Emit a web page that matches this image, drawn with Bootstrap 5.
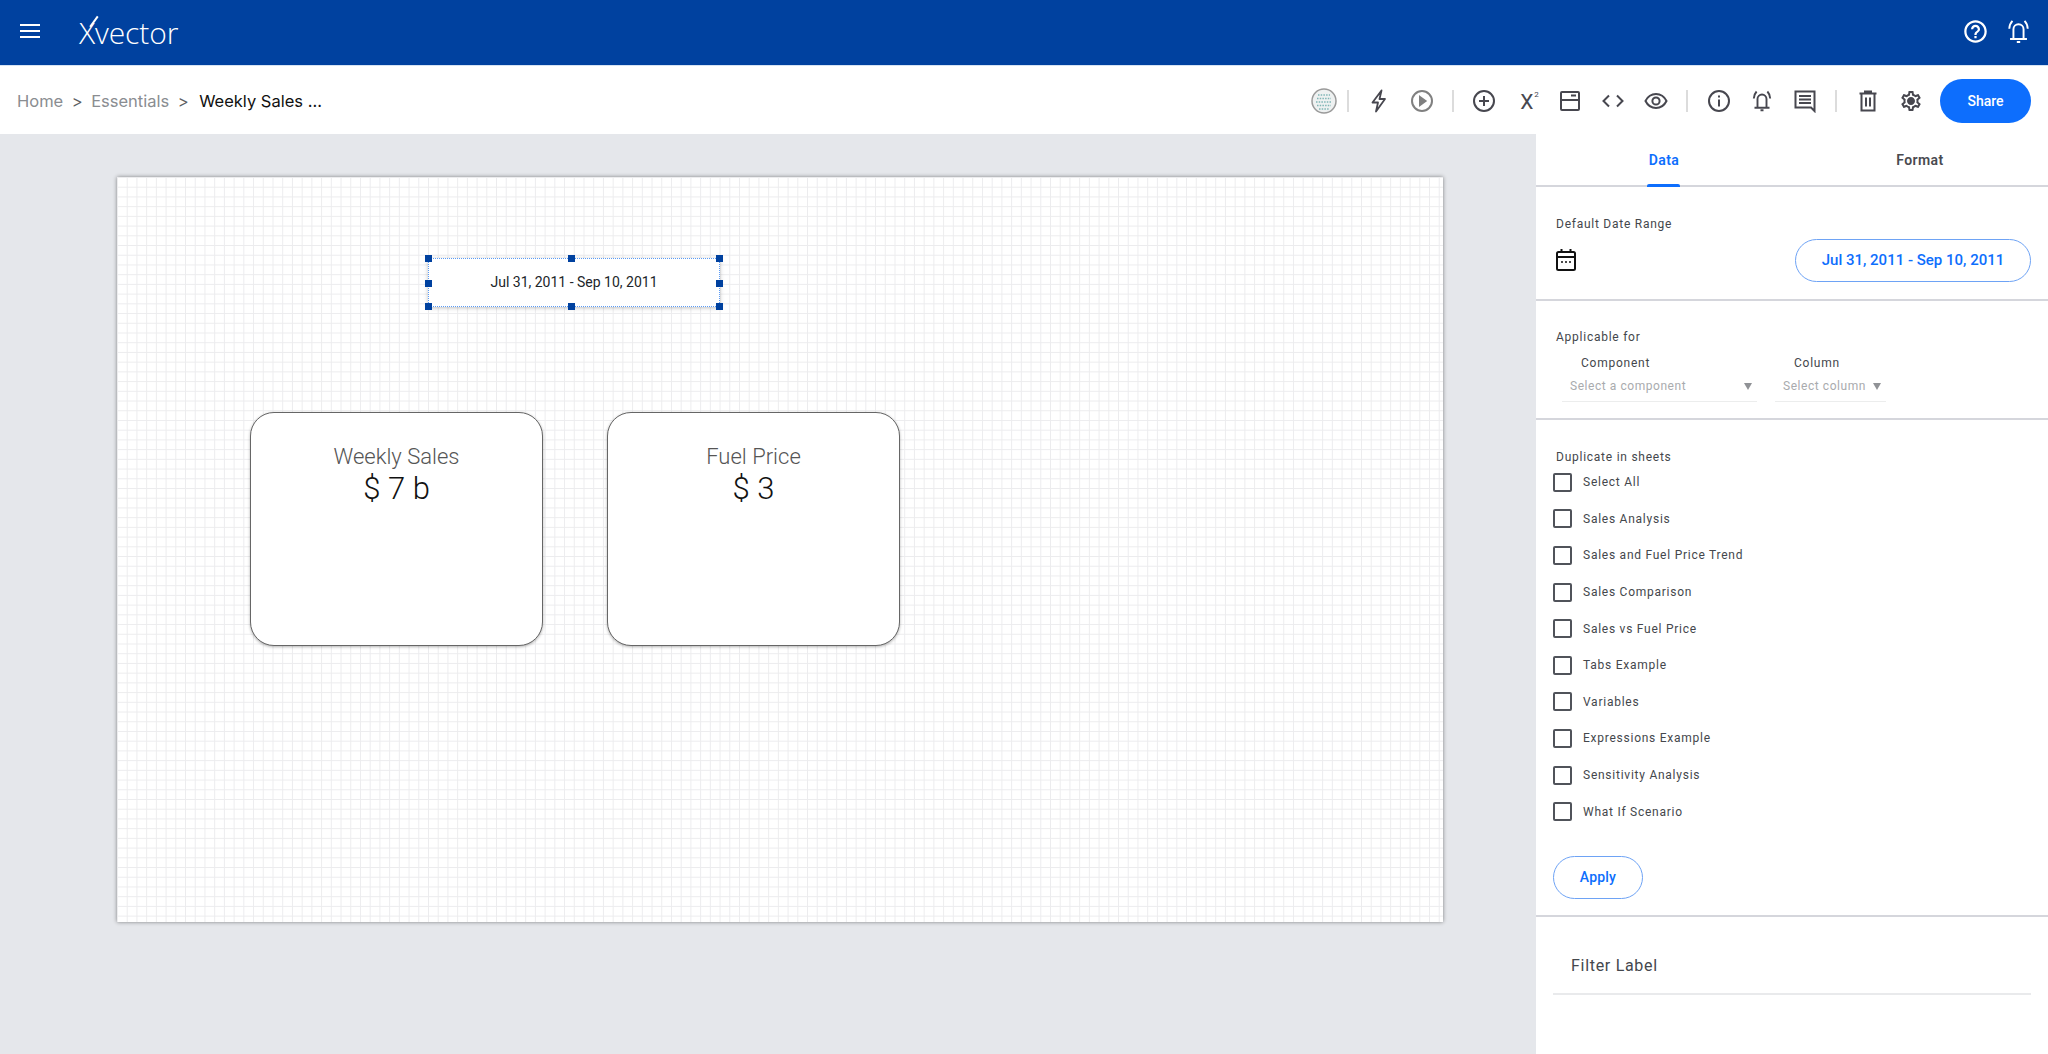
<!doctype html>
<html lang="en">
<head>
<meta charset="utf-8">
<title>Xvector</title>
<link href="https://cdn.jsdelivr.net/npm/bootstrap@5.3.0/dist/css/bootstrap.min.css" rel="stylesheet">
<style>
  body { font-family: Roboto, "Liberation Sans", sans-serif; height: 1054px; overflow: hidden; color: #212529; }
  .top-bar { height: 66px; background: #00419f; padding: 0 10px 3px 20px; border-bottom: 1px solid #d5e3f3; }
  .brand { position: relative; font-family: "Open Sans", sans-serif; font-weight: 300; font-size: 30px; color: #fff; margin: 3px 0 0 39px; letter-spacing: -.1px; line-height: 1; }
  .brand::after { content: ""; position: absolute; left: 14px; top: -3px; width: 1.5px; height: 13px; background: #fff; transform: rotate(36deg); }
  .top-bar svg.ico { width: 27px; height: 27px; }
  .top-icons { gap: 16px; margin-right: 6.5px; }
  .tool-bar { height: 68px; padding: 2px 17px 0; }
  .crumbs { font-family: Inter, sans-serif; font-size: 16.5px; gap: 8.5px; }
  .crumbs .muted { color: #8a8d91; }
  .crumbs .sep { color: #5c5f63; }
  .crumbs .now { color: #111; margin-left: 2px; }
  .tool { width: 43px; height: 30px; color: #47474f; }
  .tool svg { width: 24px; height: 24px; }
  .tool.grey { color: #808080; }
  .tool-sep { width: 2px; height: 22px; background: #dcdcdc; margin: 0 9px; }
  .tool-sep.first { margin: 0 8.5px 0 9.5px; }
  .tool-sep.second { margin: 0 8px 0 9px; }
  .avatar { width: 26px; height: 26px; }
  .x2 { font-size: 21px; line-height: 1; padding: 3px 0 0 6px; }
  .x2 sup { font-size: 8px; top: -.9em; margin-left: 1px; }
  .btn-share { width: 91px; height: 44px; border-radius: 22px; margin: 0 0 0 8px; font-size: 14px; font-weight: 500; color: #fff; background: #0d6efd; border: 0; }
  .work { height: 920px; }
  .canvas { width: 1536px; background: #e5e7eb; padding: 43px 0 0 117px; }
  .sheet { position: relative; width: 1326px; height: 745px; background-color: #fff;
    background-image: linear-gradient(#ececee 1px, transparent 1px), linear-gradient(90deg, #ececee 1px, transparent 1px);
    background-size: 9.72px 9.72px; box-shadow: 0 0 4px rgba(0,0,0,.45); }
  .date-box { position: absolute; left: 311px; top: 81px; width: 292px; height: 49px; background: #fff; border: 1px dotted #5b9bf5; font-size: 14px; box-shadow: 0 1px 4px rgba(0,0,0,.25); }
  .handle { position: absolute; width: 7px; height: 7px; background: #00419f; }
  .kpi { position: absolute; top: 235px; width: 293px; height: 234px; background: #fff; border: 1px solid #666; border-radius: 24px; padding-top: 29px; box-shadow: 0 1px 3px rgba(0,0,0,.3); }
  .kpi .name { font-size: 22px; font-weight: 300; color: #555; line-height: 30px; }
  .kpi .val { font-size: 31px; font-weight: 300; line-height: 34px; color: #111; }
  .panel { width: 512px; background: #fff; font-size: 12px; letter-spacing: .75px; color: #44474c; }
  .tabs { height: 53px; border-bottom: 2px solid #d5d6dc; }
  .tabs .nav-link { font-size: 14px; font-weight: 600; color: #4a4a50; padding: 0; height: 51px; line-height: 52px; letter-spacing: .4px; position: relative; }
  .tabs .nav-link.active { color: #0d6efd; }
  .tabs .nav-link.active::after { content: ""; position: absolute; left: 50%; margin-left: -17px; bottom: -2px; width: 33px; height: 3px; background: #0d6efd; border-radius: 2px 2px 0 0; }
  .block { border-bottom: 2px solid #d5d6dc; padding: 0 17px 0 20px; }
  .pill { border: 1px solid #6ea3f5; border-radius: 22px; color: #0d6efd; background: #fff; font-weight: 500; font-size: 15px; letter-spacing: 0; }
  .pill.date { width: 236px; height: 43px; padding: 0; }
  .pill.apply { width: 90px; height: 43px; padding: 0; font-size: 14px; letter-spacing: .2px; margin-left: -3px; display: block; }
  .pick { border-bottom: 1px solid #eceded; color: #a9abae; padding: 0 5px 0 8px; height: 31px; letter-spacing: .55px; }
  .pick .arrow { width: 0; height: 0; border-left: 4px solid transparent; border-right: 4px solid transparent; border-top: 7px solid #909296; }
  .sheet-check { min-height: 0; height: 36.6px; padding: 0; margin: 0 0 0 -3px; gap: 11px; }
  .sheet-check .form-check-input { float: none; margin: 0; width: 19px; height: 19px; border: 2px solid #50535a; border-radius: 2px; }
  .filter-label { font-size: 16px; letter-spacing: .7px; color: #44474d; border-bottom: 2px solid #e9eaec; padding: 0 0 15px 18px; margin: 37px 0 0 -3px; line-height: 24px; }
</style>
</head>
<body>

<!-- Top bar -->
<nav class="top-bar d-flex align-items-center justify-content-between">
  <div class="d-flex align-items-center">
    <svg width="20" height="16" viewBox="0 0 20 16" aria-hidden="true"><path d="M0 2h20M0 8h20M0 14h20" stroke="#fff" stroke-width="2"/></svg>
    <span class="brand">Xvector</span>
  </div>
  <div class="d-flex align-items-center top-icons">
    <svg class="ico" viewBox="0 0 24 24" fill="#fff"><path d="M11 18h2v-2h-2v2zm1-16C6.48 2 2 6.48 2 12s4.48 10 10 10 10-4.48 10-10S17.52 2 12 2zm0 18c-4.41 0-8-3.59-8-8s3.59-8 8-8 8 3.59 8 8-3.59 8-8 8zm0-14c-2.21 0-4 1.79-4 4h2c0-1.1.9-2 2-2s2 .9 2 2c0 2-3 1.75-3 5h2c0-2.25 3-2.5 3-5 0-2.21-1.79-4-4-4z"/></svg>
    <svg class="ico" viewBox="0 0 24 24" fill="none" stroke="#fff" stroke-width="1.7"><path d="M7.5 18.5V10a4.5 4.5 0 0 1 9 0v8.5M4.5 18.7h15M10.5 21.3h3M3.8 9.5c0-2.7 1-5 2.8-7M20.2 9.5c0-2.7-1-5-2.8-7"/></svg>
  </div>
</nav>

<!-- Breadcrumb and tools -->
<div class="tool-bar d-flex align-items-center justify-content-between bg-white">
  <div class="crumbs d-flex align-items-center">
    <span class="muted">Home</span><span class="sep">&gt;</span>
    <span class="muted">Essentials</span><span class="sep">&gt;</span>
    <span class="now">Weekly Sales ...</span>
  </div>
  <div class="d-flex align-items-center">
    <svg class="avatar" viewBox="0 0 26 26"><circle cx="13" cy="13" r="12" fill="#eef1f1" stroke="#9a9a9a" stroke-width="1.5"/><path d="M7 7h12M6 10.5h14M5 14h16M6 17.5h14M8 21h10" stroke="#7fb5b5" stroke-width="1.3" stroke-dasharray="1.5 1.2"/></svg>
    <span class="tool-sep first"></span>
    <span class="tool d-flex align-items-center justify-content-center"><svg viewBox="0 0 24 24" fill="none" stroke="currentColor" stroke-width="1.8" stroke-linejoin="round"><path d="M14.5 1.5 5.5 13.5H11L9 22.5l9-12.5h-5.500z"/></svg></span>
    <span class="tool grey d-flex align-items-center justify-content-center"><svg viewBox="0 0 24 24" fill="none" stroke="currentColor" stroke-width="2"><circle cx="12" cy="12" r="10"/><path d="M10 8l5.5 4-5.500 4z" fill="currentColor"/></svg></span>
    <span class="tool-sep second"></span>
    <span class="tool d-flex align-items-center justify-content-center"><svg viewBox="0 0 24 24" fill="none" stroke="currentColor" stroke-width="2"><circle cx="12" cy="12" r="10"/><path d="M12 7v10M7 12h10"/></svg></span>
    <span class="tool d-flex align-items-center justify-content-center x2">X<sup>2</sup></span>
    <span class="tool d-flex align-items-center justify-content-center"><svg viewBox="0 0 24 24" fill="none" stroke="currentColor" stroke-width="2"><rect x="3" y="3" width="18" height="18" rx="1"/><path d="M3 11h18M13 6.5h5"/></svg></span>
    <span class="tool d-flex align-items-center justify-content-center"><svg viewBox="0 0 24 24" fill="none" stroke="currentColor" stroke-width="2"><path d="M8 6.500 2.500 12 8 17.500M16 6.500l5.500 5.500-5.500 5.500"/></svg></span>
    <span class="tool d-flex align-items-center justify-content-center"><svg viewBox="0 0 24 24" fill="none" stroke="currentColor" stroke-width="2"><path d="M1.5 12C4 7 7.500 5 12 5s8 2 10.500 7C20 17 16.500 19 12 19S4 17 1.500 12z"/><circle cx="12" cy="12" r="3.6"/></svg></span>
    <span class="tool-sep"></span>
    <span class="tool d-flex align-items-center justify-content-center"><svg viewBox="0 0 24 24" fill="none" stroke="currentColor" stroke-width="2"><circle cx="12" cy="12" r="10"/><path d="M12 10.5V17.500M12 6.500v2"/></svg></span>
    <span class="tool d-flex align-items-center justify-content-center"><svg viewBox="0 0 24 24" fill="none" stroke="currentColor" stroke-width="1.9"><path d="M7.5 18.5V10a4.5 4.5 0 0 1 9 0v8.5M4.5 18.7h15M10.5 21.3h3M3.8 9.5c0-2.7 1-5 2.8-7M20.2 9.5c0-2.7-1-5-2.8-7"/></svg></span>
    <span class="tool d-flex align-items-center justify-content-center"><svg viewBox="0 0 24 24" fill="none" stroke="currentColor" stroke-width="2"><path d="M2.5 2.5h19V22L18 18.5H2.5z"/><path d="M6 7h12M6 10.5h12M6 14h12"/></svg></span>
    <span class="tool-sep"></span>
    <span class="tool d-flex align-items-center justify-content-center"><svg viewBox="0 0 24 24" fill="none" stroke="currentColor" stroke-width="2"><path d="M3.5 4.5h17M9 4.500V2.500h6v2M5.500 4.500V21.500h13V4.500M10 8.500v9M14 8.500v9"/></svg></span>
    <span class="tool d-flex align-items-center justify-content-center"><svg viewBox="0 0 24 24" fill="currentColor"><path d="M19.43 12.98c.04-.32.07-.64.07-.98 0-.34-.03-.66-.07-.98l2.11-1.65c.19-.15.24-.42.12-.64l-2-3.46c-.09-.16-.26-.25-.44-.25-.06 0-.12.01-.17.03l-2.49 1c-.52-.4-1.08-.73-1.69-.98l-.38-2.65C14.46 2.18 14.25 2 14 2h-4c-.25 0-.46.18-.49.42l-.38 2.65c-.61.25-1.17.59-1.69.98l-2.49-1c-.06-.02-.12-.03-.18-.03-.17 0-.34.09-.43.25l-2 3.46c-.13.22-.07.49.12.64l2.11 1.65c-.04.32-.07.65-.07.98 0 .33.03.66.07.98l-2.11 1.65c-.19.15-.24.42-.12.64l2 3.46c.09.16.26.25.44.25.06 0 .12-.01.17-.03l2.49-1c.52.4 1.08.73 1.69.98l.38 2.65c.03.24.24.42.49.42h4c.25 0 .46-.18.49-.42l.38-2.65c.61-.25 1.17-.59 1.69-.98l2.49 1c.06.02.12.03.18.03.17 0 .34-.09.43-.25l2-3.46c.12-.22.07-.49-.12-.64l-2.11-1.65zm-1.98-1.71c.04.31.05.52.05.73 0 .21-.02.43-.05.73l-.14 1.13.89.7 1.08.84-.7 1.21-1.27-.51-1.04-.42-.9.68c-.43.32-.84.56-1.25.73l-1.06.43-.16 1.13-.2 1.35h-1.4l-.19-1.35-.16-1.13-1.06-.43c-.43-.18-.83-.41-1.23-.71l-.91-.7-1.06.43-1.27.51-.7-1.21 1.08-.84.89-.7-.14-1.13c-.03-.31-.05-.54-.05-.74s.02-.43.05-.73l.14-1.13-.89-.7-1.08-.84.7-1.21 1.27.51 1.04.42.9-.68c.43-.32.84-.56 1.25-.73l1.06-.43.16-1.13.2-1.35h1.39l.19 1.35.16 1.13 1.06.43c.43.18.83.41 1.23.71l.91.7 1.06-.43 1.27-.51.7 1.21-1.07.85-.89.7.14 1.13zM12 8c-2.21 0-4 1.79-4 4s1.79 4 4 4 4-1.79 4-4-1.79-4-4-4z"/></svg></span>
    <button class="btn btn-share" type="button">Share</button>
  </div>
</div>

<div class="work d-flex">
  <!-- Canvas -->
  <div class="canvas">
    <div class="sheet">
      <div class="date-box d-flex align-items-center justify-content-center">
        Jul 31, 2011 - Sep 10, 2011
        <i class="handle" style="left:-4px;top:-4px"></i><i class="handle" style="left:139px;top:-4px"></i><i class="handle" style="right:-4px;top:-4px"></i>
        <i class="handle" style="left:-4px;top:21px"></i><i class="handle" style="right:-4px;top:21px"></i>
        <i class="handle" style="left:-4px;bottom:-4px"></i><i class="handle" style="left:139px;bottom:-4px"></i><i class="handle" style="right:-4px;bottom:-4px"></i>
      </div>
      <div class="kpi text-center" style="left:133px">
        <div class="name">Weekly Sales</div>
        <div class="val">$ 7 b</div>
      </div>
      <div class="kpi text-center" style="left:490px">
        <div class="name">Fuel Price</div>
        <div class="val">$ 3</div>
      </div>
    </div>
  </div>

  <!-- Right panel -->
  <aside class="panel">
    <ul class="nav nav-justified tabs">
      <li class="nav-item"><a class="nav-link active" href="#">Data</a></li>
      <li class="nav-item"><a class="nav-link" href="#">Format</a></li>
    </ul>

    <div class="block" style="height:114px;padding-top:28px">
      <div>Default Date Range</div>
      <div class="d-flex align-items-center justify-content-between" style="margin-top:5.5px">
        <svg width="20" height="22" viewBox="0 0 20 22" fill="none" stroke="#111" stroke-width="2"><rect x="1" y="3" width="18" height="18" rx="1.5"/><path d="M1 8h18M5.5 0v4M14.5 0v4"/><path d="M5 13h2M9 13h2M13 13h2" stroke-width="1.6"/></svg>
        <button class="pill date" type="button">Jul 31, 2011 - Sep 10, 2011</button>
      </div>
    </div>

    <div class="block" style="height:119px;padding-top:27px">
      <div>Applicable for</div>
      <div class="d-flex" style="margin-top:9px">
        <div style="width:195px;margin-left:6px">
          <div style="padding-left:19px;line-height:16px">Component</div>
          <div class="pick d-flex align-items-center justify-content-between"><span>Select a component</span><span class="arrow"></span></div>
        </div>
        <div style="width:111px;margin-left:18px">
          <div style="padding-left:19px;line-height:16px">Column</div>
          <div class="pick d-flex align-items-center justify-content-between"><span>Select column</span><span class="arrow"></span></div>
        </div>
      </div>
    </div>

    <div class="block" style="padding-top:28px;padding-bottom:16px">
      <div style="margin-bottom:-2px">Duplicate in sheets</div>
      <div class="form-check d-flex sheet-check align-items-center"><input class="form-check-input" type="checkbox" id="s0"><label class="form-check-label" for="s0">Select All</label></div>
      <div class="form-check d-flex sheet-check align-items-center"><input class="form-check-input" type="checkbox" id="s1"><label class="form-check-label" for="s1">Sales Analysis</label></div>
      <div class="form-check d-flex sheet-check align-items-center"><input class="form-check-input" type="checkbox" id="s2"><label class="form-check-label" for="s2">Sales and Fuel Price Trend</label></div>
      <div class="form-check d-flex sheet-check align-items-center"><input class="form-check-input" type="checkbox" id="s3"><label class="form-check-label" for="s3">Sales Comparison</label></div>
      <div class="form-check d-flex sheet-check align-items-center"><input class="form-check-input" type="checkbox" id="s4"><label class="form-check-label" for="s4">Sales vs Fuel Price</label></div>
      <div class="form-check d-flex sheet-check align-items-center"><input class="form-check-input" type="checkbox" id="s5"><label class="form-check-label" for="s5">Tabs Example</label></div>
      <div class="form-check d-flex sheet-check align-items-center"><input class="form-check-input" type="checkbox" id="s6"><label class="form-check-label" for="s6">Variables</label></div>
      <div class="form-check d-flex sheet-check align-items-center"><input class="form-check-input" type="checkbox" id="s7"><label class="form-check-label" for="s7">Expressions Example</label></div>
      <div class="form-check d-flex sheet-check align-items-center"><input class="form-check-input" type="checkbox" id="s8"><label class="form-check-label" for="s8">Sensitivity Analysis</label></div>
      <div class="form-check d-flex sheet-check align-items-center"><input class="form-check-input" type="checkbox" id="s9"><label class="form-check-label" for="s9">What If Scenario</label></div>
      <button class="pill apply" type="button" style="margin-top:26px">Apply</button>
    </div>

    <div style="padding:0 17px 0 20px">
      <div class="filter-label">Filter Label</div>
    </div>
  </aside>
</div>

<script src="https://cdn.jsdelivr.net/npm/bootstrap@5.3.0/dist/js/bootstrap.bundle.min.js"></script>
</body>
</html>
